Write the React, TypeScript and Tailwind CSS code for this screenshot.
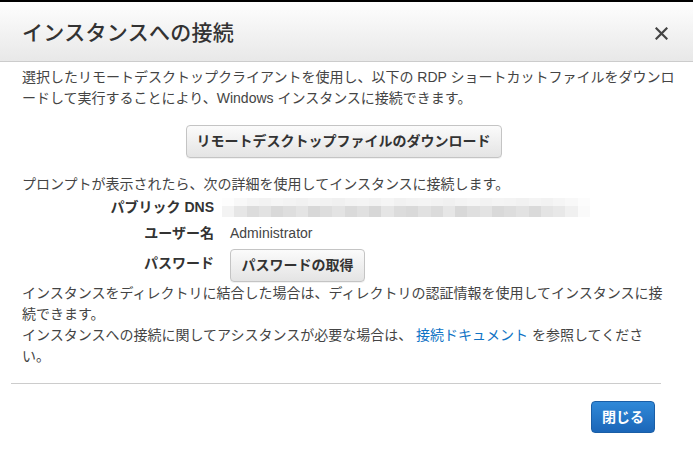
import React from "react";

const font = {
  fontFamily: '"Liberation Sans", "Noto Sans CJK JP", sans-serif',
};

const topRow = [
  "#fdfdfd", "#f8f8f8", "#f4f4f4", "#f2f2f2", "#f5f5f5", "#f3f3f3", "#f1f1f1", "#f4f4f4",
  "#f2f2f2", "#f0f0f0", "#f3f3f3", "#f4f4f4", "#f2f2f2", "#f5f5f5", "#f1f1f1", "#f3f3f3",
  "#f4f4f4", "#f2f2f2", "#f0f0f0", "#f3f3f3", "#f5f5f5", "#f2f2f2", "#f4f4f4", "#f3f3f3",
  "#f1f1f1", "#f4f4f4", "#f2f2f2", "#f5f5f5", "#f8f8f8", "#fcfcfc",
];
const botRow = [
  "#f3f3f3", "#e6e6e6", "#dcdcdc", "#e2e2e2", "#d9d9d9", "#dedede", "#e4e4e4", "#d8d8d8",
  "#dddddd", "#e3e3e3", "#dadada", "#e0e0e0", "#d7d7d7", "#e5e5e5", "#dcdcdc", "#d9d9d9",
  "#e1e1e1", "#dbdbdb", "#e6e6e6", "#d8d8d8", "#dfdfdf", "#e3e3e3", "#d9d9d9", "#dddddd",
  "#e2e2e2", "#dadada", "#e4e4e4", "#e8e8e8", "#f0f0f0", "#fafafa",
];

function Blur() {
  return (
    <div className="flex flex-col w-[368px] ml-[-8px]">
      <div className="flex h-[8px]">
        {topRow.map((c, i) => (
          <div key={i} className="h-full flex-1" style={{ backgroundColor: c }} />
        ))}
      </div>
      <div className="flex h-[11px]">
        {botRow.map((c, i) => (
          <div key={i} className="h-full flex-1" style={{ backgroundColor: c }} />
        ))}
      </div>
    </div>
  );
}

const grayBtn =
  "h-[33px] rounded-[4px] border border-[#c4c4c4] bg-gradient-to-b from-[#fbfbfb] to-[#e4e4e4] text-[14px] font-bold text-[#333] shadow-[0_1px_0_rgba(0,0,0,0.05)]";

export default function App() {
  return (
    <div
      className="w-[693px] h-[450px] bg-white border-t-2 border-black overflow-hidden text-[#444]"
      style={font}
    >
      <div className="h-[60px] border-b border-[#cccccc] bg-gradient-to-b from-[#fefefe] to-[#e8e8e8] flex items-center justify-between pl-[22px] pr-[25px] pt-[2px]">
        <div className="text-[21px] font-medium text-[#333] tracking-[0.3px]">
          インスタンスへの接続
        </div>
        <svg width="13" height="13" viewBox="0 0 13 13" className="mt-[2px]">
          <path d="M1.5 1.5 L11.5 11.5 M11.5 1.5 L1.5 11.5" stroke="#444" strokeWidth="2.2" strokeLinecap="square" />
        </svg>
      </div>

      <div className="px-[22px] pt-[5px] text-[14px] leading-[21px]">
        <div className="whitespace-nowrap">
          選択したリモートデスクトップクライアントを使用し、以下の RDP ショートカットファイルをダウンロ
        </div>
        <div className="whitespace-nowrap">
          ードして実行することにより、Windows インスタンスに接続できます。
        </div>

        <div className="flex justify-center mt-[16px] pr-[6px]">
          <button className={`${grayBtn} w-[316px]`}>
            リモートデスクトップファイルのダウンロード
          </button>
        </div>

        <div className="mt-[16px] whitespace-nowrap">
          プロンプトが表示されたら、次の詳細を使用してインスタンスに接続します。
        </div>

        <div className="flex flex-col">
          <div className="flex items-center h-[25px]">
            <div className="w-[192px] text-right font-bold text-[#333]">パブリック DNS</div>
            <div className="ml-[16px] flex items-center">
              <Blur />
            </div>
          </div>
          <div className="flex items-center h-[27px]">
            <div className="w-[192px] text-right font-bold text-[#333]">ユーザー名</div>
            <div className="ml-[16px] text-[#444]">Administrator</div>
          </div>
          <div className="flex items-center pt-[2px]">
            <div className="w-[192px] text-right font-bold text-[#333] mt-[-4px]">パスワード</div>
            <div className="ml-[16px]">
              <button className={`${grayBtn} w-[135px]`}>パスワードの取得</button>
            </div>
          </div>
        </div>

        <div className="mt-[1px] whitespace-nowrap">
          インスタンスをディレクトリに結合した場合は、ディレクトリの認証情報を使用してインスタンスに接
        </div>
        <div>続できます。</div>
        <div className="whitespace-nowrap">
          インスタンスへの接続に関してアシスタンスが必要な場合は、{" "}
          <span className="text-[#0f73c5]">接続ドキュメント</span> を参照してくださ
        </div>
        <div>い。</div>
      </div>

      <div className="ml-[11px] w-[650px] mt-[16px] border-t border-[#cccccc]" />

      <div className="flex justify-end pr-[38px] mt-[17px]">
        <button className="w-[64px] h-[32px] rounded-[4px] border border-[#1a5ea6] bg-gradient-to-b from-[#3089d8] to-[#1b66b8] text-white text-[14px] font-bold">
          閉じる
        </button>
      </div>
    </div>
  );
}
